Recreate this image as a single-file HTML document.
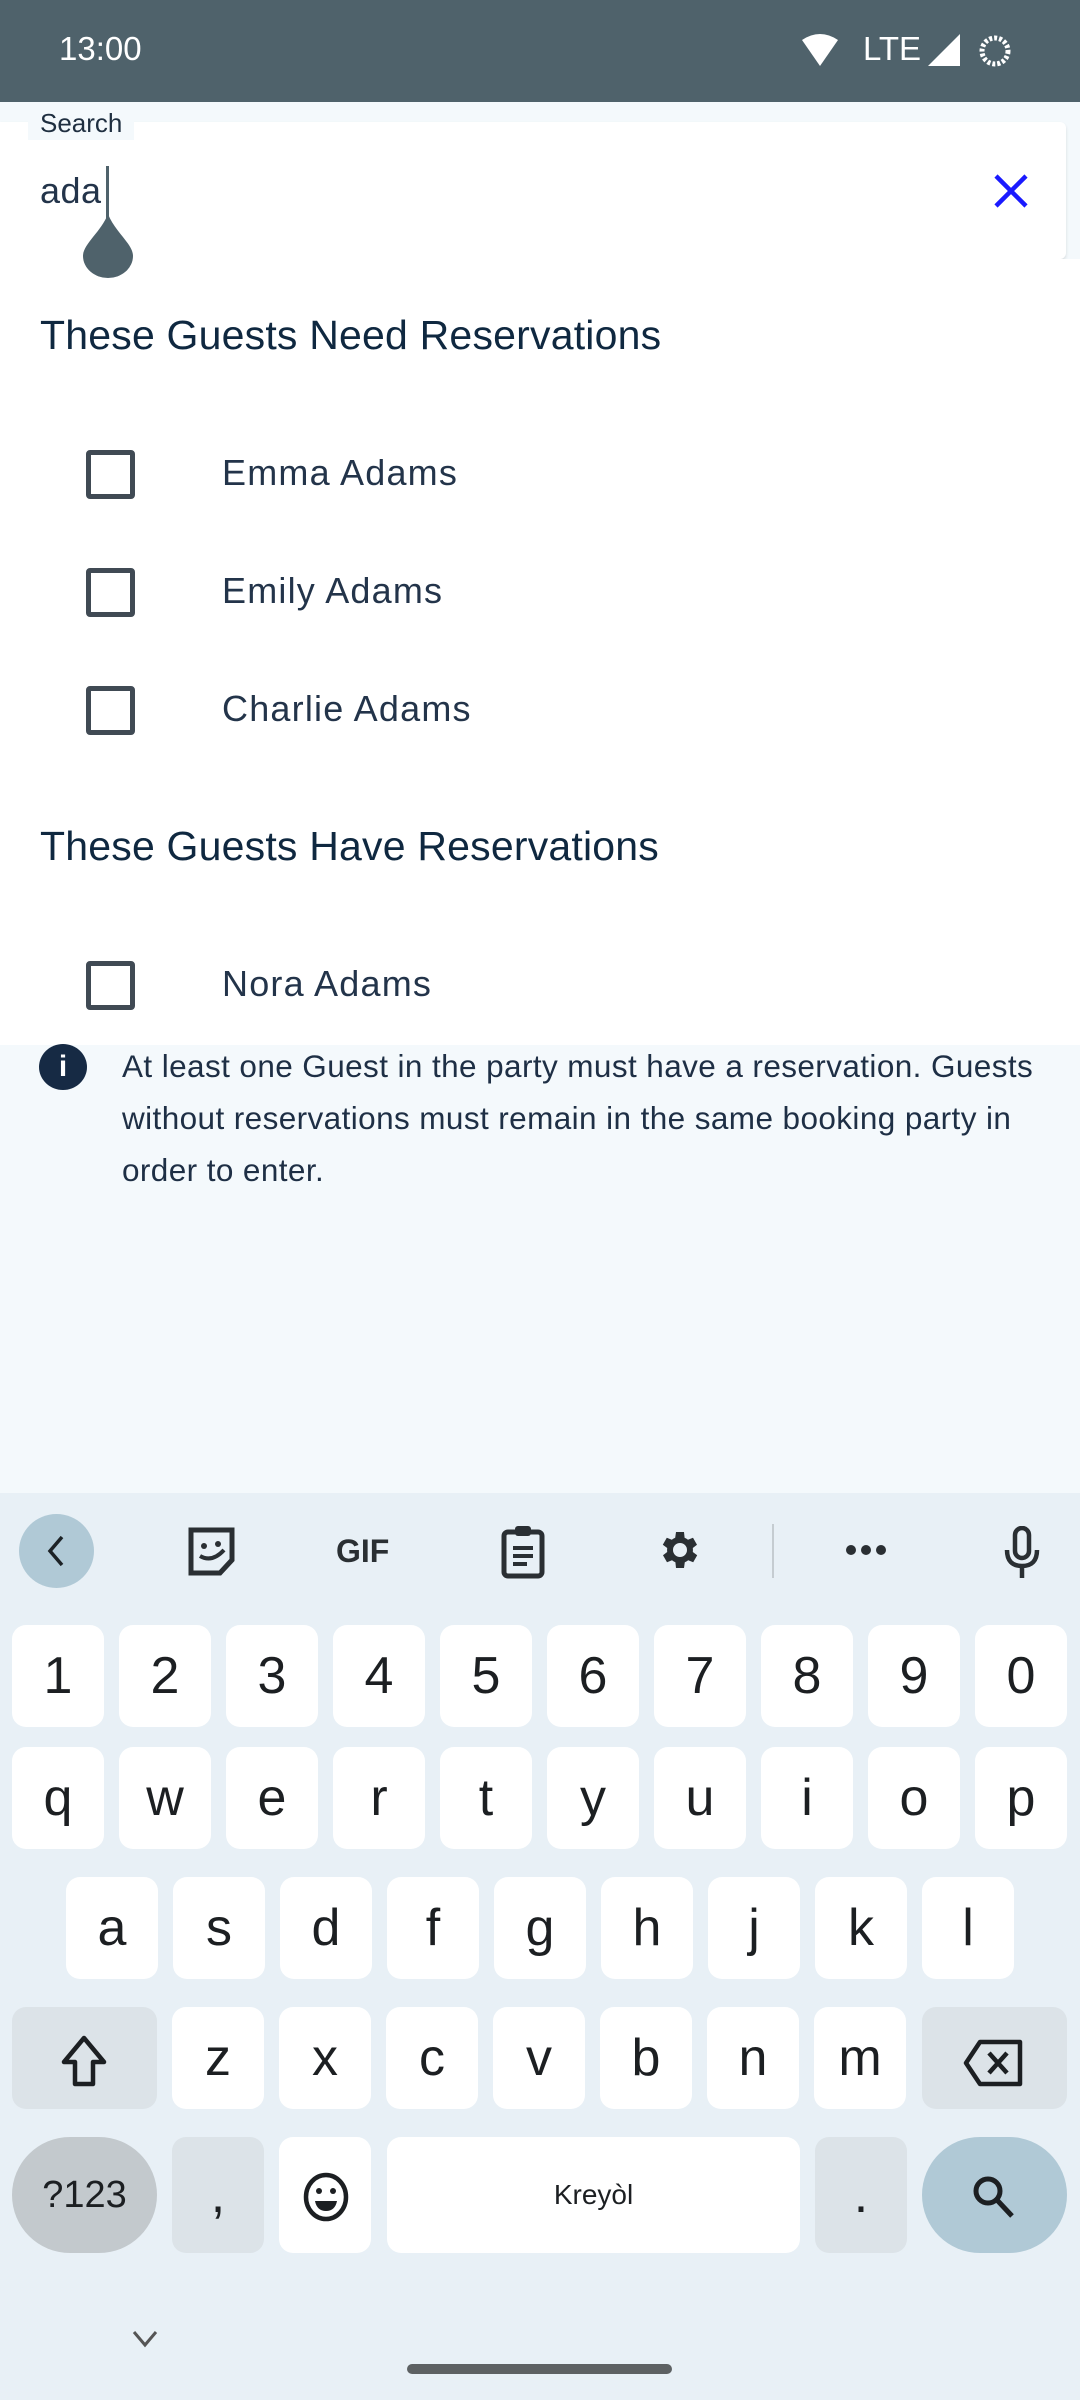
<!DOCTYPE html>
<html><head><meta charset="utf-8"><style>
*{margin:0;padding:0;box-sizing:border-box}
body{width:1080px;height:2400px;position:relative;background:#f4f9fc;font-family:"Liberation Sans",sans-serif;overflow:hidden}
.a{position:absolute}
.sb{left:0;top:0;width:1080px;height:102px;background:#4f626b;color:#fff}
.card{left:0;top:122px;width:1066px;height:137px;background:#fff;border-radius:0 6px 6px 0;box-shadow:0 2px 3px rgba(0,0,0,.12)}
.white{left:0;top:259px;width:1080px;height:786px;background:#fff}
.h{left:40px;font-size:41px;color:#0f2840;letter-spacing:0.2px}
.cb{left:86px;width:49px;height:49px;border:5px solid #404a54;border-radius:4px}
.nm{left:222px;font-size:36px;color:#23344a;letter-spacing:1.2px}
.kb{left:0;top:1493px;width:1080px;height:907px;background:#e8f0f6}
.k{background:#fff;border-radius:14px;height:102px;width:92px;text-align:center;font-size:52px;color:#1c1f22;line-height:102px}
.g{background:#dce3e8}
.ic{color:#2a2f33}
</style></head><body>
<div class="a sb">
<div class="a" style="left:59px;top:30px;font-size:33px">13:00</div>
<svg class="a" style="left:800px;top:34px" width="40" height="34" viewBox="0 0 40 34"><path d="M2 6 Q20 -6 38 6 L20 32 Z" fill="#fff"/></svg>
<div class="a" style="left:863px;top:30px;font-size:33px">LTE</div>
<svg class="a" style="left:928px;top:34px" width="34" height="34"><path d="M32 0 V32 H0 Z" fill="#fff"/></svg>
<svg class="a" style="left:977px;top:33px" width="36" height="36"><circle cx="18" cy="18" r="13" fill="none" stroke="#fff" stroke-width="5" stroke-dasharray="3 2"/></svg>
</div>
<div class="a card"></div>
<div class="a white"></div>
<div class="a" style="left:28px;top:108px;padding:0 12px;background:#f4f9fc;font-size:26px;color:#1f2f40;height:32px;line-height:30px">Search</div>
<div class="a" style="left:40px;top:170px;font-size:36px;color:#23344a;letter-spacing:0.5px">ada</div>
<div class="a" style="left:106px;top:166px;width:3px;height:56px;background:#4f626b"></div>
<svg class="a" style="left:83px;top:214px" width="50" height="64"><path d="M25 0 C32 18 50 30 50 42 A25 22 0 0 1 0 42 C0 30 18 18 25 0Z" fill="#4f626b"/></svg>
<svg class="a" style="left:992px;top:172px" width="38" height="38"><path d="M4 4 L34 34 M34 4 L4 34" stroke="#1a1aff" stroke-width="4.5"/></svg>
<div class="a h" style="top:312px">These Guests Need Reservations</div>
<div class="a cb" style="top:450px"></div><div class="a nm" style="top:452px">Emma Adams</div>
<div class="a cb" style="top:568px"></div><div class="a nm" style="top:570px">Emily Adams</div>
<div class="a cb" style="top:686px"></div><div class="a nm" style="top:688px">Charlie Adams</div>
<div class="a h" style="top:823px">These Guests Have Reservations</div>
<div class="a cb" style="top:961px"></div><div class="a nm" style="top:963px">Nora Adams</div>
<div class="a" style="left:39px;top:1044px;width:48px;height:46px;border-radius:50%;background:#162a44;color:#fff;font-weight:bold;font-size:30px;text-align:center;line-height:46px">i</div>
<div class="a" style="left:122px;top:1040px;width:935px;font-size:31.5px;line-height:52px;color:#1e2f45;letter-spacing:0.4px">At least one Guest in the party must have a reservation. Guests without reservations must remain in the same booking party in order to enter.</div>
<div class="a kb"></div>
<div class="a" style="left:19px;top:1514px;width:75px;height:74px;border-radius:50%;background:#b0c9d6"></div>
<svg class="a" style="left:44px;top:1534px" width="24" height="34"><path d="M18 3 L6 17 L18 31" stroke="#1c2226" stroke-width="3.5" fill="none"/></svg>
<svg class="a" style="left:186px;top:1525px" width="54" height="52"><path d="M5 5 H46 V35 L34 48 H5 Z" fill="none" stroke="#2a2f33" stroke-width="5"/><circle cx="18" cy="21" r="3" fill="#2a2f33"/><circle cx="32" cy="19" r="3" fill="#2a2f33"/><path d="M14 31 Q26 38 38 25" stroke="#2a2f33" stroke-width="4" fill="none"/></svg>
<div class="a ic" style="left:336px;top:1533px;font-size:32px;font-weight:bold">GIF</div>
<svg class="a" style="left:500px;top:1524px" width="46" height="56"><rect x="4" y="8" width="38" height="44" rx="4" fill="none" stroke="#2a2f33" stroke-width="5"/><rect x="15" y="2" width="16" height="10" rx="3" fill="#2a2f33"/><path d="M13 24H33M13 32H33M13 40H27" stroke="#2a2f33" stroke-width="4"/></svg>
<svg class="a" style="left:654px;top:1526px" width="48" height="48" viewBox="0 0 24 24"><path fill="#2a2f33" d="M19.4 13a7.5 7.5 0 0 0 0-2l2.1-1.6-2-3.5-2.5 1a7 7 0 0 0-1.7-1L15 3h-4l-.4 2.9a7 7 0 0 0-1.7 1l-2.5-1-2 3.5L6.6 11a7.5 7.5 0 0 0 0 2l-2.1 1.6 2 3.5 2.5-1a7 7 0 0 0 1.7 1L11 21h4l.4-2.9a7 7 0 0 0 1.7-1l2.5 1 2-3.5zM13 15.5a3.5 3.5 0 1 1 0-7 3.5 3.5 0 0 1 0 7z"/></svg>
<div class="a" style="left:772px;top:1524px;width:2px;height:54px;background:#c5ccd1"></div>
<svg class="a" style="left:845px;top:1543px" width="42" height="14"><circle cx="6" cy="7" r="5" fill="#2a2f33"/><circle cx="21" cy="7" r="5" fill="#2a2f33"/><circle cx="36" cy="7" r="5" fill="#2a2f33"/></svg>
<svg class="a" style="left:1002px;top:1526px" width="40" height="52"><rect x="13" y="2" width="14" height="30" rx="7" fill="none" stroke="#2a2f33" stroke-width="4.5"/><path d="M5 24 Q5 40 20 40 Q35 40 35 24 M20 40 V52" stroke="#2a2f33" stroke-width="4.5" fill="none"/></svg>

<div class="a k" style="left:12px;top:1625px">1</div><div class="a k" style="left:119px;top:1625px">2</div><div class="a k" style="left:226px;top:1625px">3</div><div class="a k" style="left:333px;top:1625px">4</div><div class="a k" style="left:440px;top:1625px">5</div><div class="a k" style="left:547px;top:1625px">6</div><div class="a k" style="left:654px;top:1625px">7</div><div class="a k" style="left:761px;top:1625px">8</div><div class="a k" style="left:868px;top:1625px">9</div><div class="a k" style="left:975px;top:1625px">0</div>
<div class="a k" style="left:12px;top:1747px">q</div><div class="a k" style="left:119px;top:1747px">w</div><div class="a k" style="left:226px;top:1747px">e</div><div class="a k" style="left:333px;top:1747px">r</div><div class="a k" style="left:440px;top:1747px">t</div><div class="a k" style="left:547px;top:1747px">y</div><div class="a k" style="left:654px;top:1747px">u</div><div class="a k" style="left:761px;top:1747px">i</div><div class="a k" style="left:868px;top:1747px">o</div><div class="a k" style="left:975px;top:1747px">p</div>
<div class="a k" style="left:66px;top:1877px">a</div><div class="a k" style="left:173px;top:1877px">s</div><div class="a k" style="left:280px;top:1877px">d</div><div class="a k" style="left:387px;top:1877px">f</div><div class="a k" style="left:494px;top:1877px">g</div><div class="a k" style="left:601px;top:1877px">h</div><div class="a k" style="left:708px;top:1877px">j</div><div class="a k" style="left:815px;top:1877px">k</div><div class="a k" style="left:922px;top:1877px">l</div>
<div class="a k g" style="left:12px;top:2007px;width:145px"></div>
<svg class="a" style="left:58px;top:2034px" width="52" height="56"><path d="M26 4 L46 28 H35 V50 H17 V28 H6 Z" fill="none" stroke="#1c1f22" stroke-width="4.5" stroke-linejoin="round"/></svg>
<div class="a k" style="left:172px;top:2007px">z</div><div class="a k" style="left:279px;top:2007px">x</div><div class="a k" style="left:386px;top:2007px">c</div><div class="a k" style="left:493px;top:2007px">v</div><div class="a k" style="left:600px;top:2007px">b</div><div class="a k" style="left:707px;top:2007px">n</div><div class="a k" style="left:814px;top:2007px">m</div>
<div class="a k g" style="left:922px;top:2007px;width:145px"></div>
<svg class="a" style="left:962px;top:2038px" width="64" height="50"><path d="M18 4 H58 V46 H18 L4 25 Z" fill="none" stroke="#1c1f22" stroke-width="4.5" stroke-linejoin="round"/><path d="M27 15 L45 35 M45 15 L27 35" stroke="#1c1f22" stroke-width="4.5"/></svg>
<div class="a k" style="left:12px;top:2137px;width:145px;height:116px;border-radius:58px;background:#c3c9cd;font-size:38px;line-height:116px">?123</div>
<div class="a k g" style="left:172px;top:2137px;height:116px;line-height:116px">,</div>
<div class="a k" style="left:279px;top:2137px;height:116px"></div>
<svg class="a" style="left:302px;top:2172px" width="48" height="50"><ellipse cx="24" cy="25" rx="20" ry="22" fill="none" stroke="#1c1f22" stroke-width="4.5"/><circle cx="17" cy="19" r="3" fill="#1c1f22"/><circle cx="31" cy="19" r="3" fill="#1c1f22"/><path d="M13 29 H35 Q33 39 24 39 Q15 39 13 29Z" fill="#1c1f22"/></svg>
<div class="a k" style="left:387px;top:2137px;width:413px;height:116px;font-size:28px;line-height:116px">Kreyòl</div>
<div class="a k g" style="left:815px;top:2137px;height:116px;line-height:116px">.</div>
<div class="a k" style="left:922px;top:2137px;width:145px;height:116px;border-radius:58px;background:#b0c9d6"></div>
<svg class="a" style="left:970px;top:2173px" width="48" height="48"><circle cx="18" cy="18" r="12" fill="none" stroke="#1c1f22" stroke-width="5"/><path d="M27 27 L42 43" stroke="#1c1f22" stroke-width="5"/></svg>
<svg class="a" style="left:132px;top:2330px" width="26" height="18"><path d="M2 2 L13 15 L24 2" stroke="#555" stroke-width="3" fill="none"/></svg>
<div class="a" style="left:407px;top:2364px;width:265px;height:10px;border-radius:5px;background:#5d6163"></div>
</body></html>
